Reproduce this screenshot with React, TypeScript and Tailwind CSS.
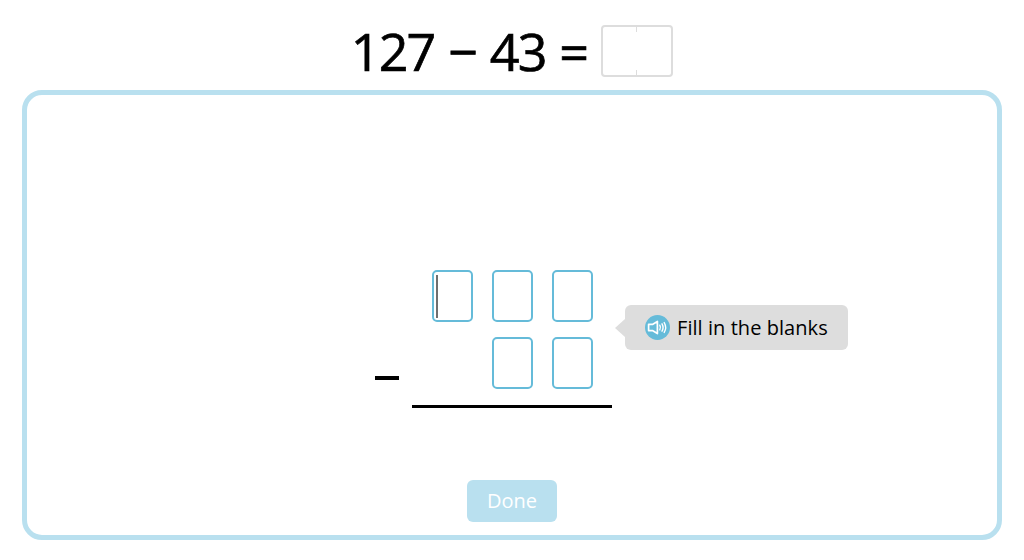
function Blank({ caret }: { caret?: boolean }) {
  return (
    <div className="w-[41px] h-[52px] border-2 border-[#65bbd9] rounded-[5px] bg-white pt-[3px] pl-[2px]">
      {caret && <div className="w-[2px] h-[43px] bg-[#6f6f6f]" />}
    </div>
  );
}

function SpeakerIcon() {
  return (
    <svg width="25" height="25" viewBox="0 0 25 25" className="shrink-0">
      <circle cx="12.5" cy="12.5" r="12.5" fill="#65bbd9" />
      <path d="M3.6 9.4h3.8l5-3v12.2l-5-3H3.6z" fill="none" stroke="#fff" strokeWidth="1.7" strokeLinejoin="round" />
      <path d="M14.8 10.2c.8 1.4.8 3.2 0 4.6M17 8.8c1.3 2.3 1.3 5.1 0 7.4M19.2 7.6c1.8 3 1.8 6.8 0 9.8" fill="none" stroke="#fff" strokeWidth="1.4" strokeLinecap="round" />
    </svg>
  );
}

export default function App() {
  return (
    <div className="w-[1024px] h-[560px] bg-white overflow-hidden flex flex-col items-center font-['Open_Sans',sans-serif] text-black">
      <div className="h-[90px] flex items-start pt-[25px] gap-[14px]">
        <div className="text-[52px] leading-[52px] [-webkit-text-stroke:0.7px_black] tracking-[-1.9px] [word-spacing:2.2px] whitespace-nowrap">127 − 43 =</div>
        <div className="relative w-[72px] h-[52px] border-2 border-[#dddddd] rounded-[4px]">
          <div className="absolute left-[33px] top-0 w-[1px] h-[5px] bg-[#dddddd]" />
          <div className="absolute left-[33px] bottom-0 w-[1px] h-[5px] bg-[#dddddd]" />
        </div>
      </div>

      <div className="w-[980px] h-[450px] border-[5px] border-[#b9e0ef] rounded-[20px] flex flex-col items-center">
        <div className="relative mt-[175px] w-[200px]">
          <div className="flex justify-end gap-[19px] pr-[19px]">
            <Blank caret />
            <Blank />
            <Blank />
          </div>
          <div className="flex justify-end gap-[19px] pr-[19px] mt-[15px]">
            <Blank />
            <Blank />
          </div>
          <div className="mt-[16px] h-[3px] bg-black" />
          <div className="absolute left-[-37px] top-[106px] w-[24px] h-[4px] bg-black" />

          <div className="absolute left-[213px] top-[35px] w-[223px] h-[45px] rounded-[6px] bg-[#dddddd] flex items-center pl-[20px] pr-3 gap-[7px]">
            <div className="absolute left-[-10px] top-[14px] w-0 h-0 border-y-[9px] border-y-transparent border-r-[10px] border-r-[#dddddd]" />
            <SpeakerIcon />
            <span className="text-[20px] tracking-[0.06px] leading-[28px] whitespace-nowrap">Fill in the blanks</span>
          </div>
        </div>

        <div className="mt-[72px] w-[90px] h-[42px] rounded-[6px] bg-[#b9e0ef] text-white text-[20px] flex items-center justify-center">
          Done
        </div>
      </div>
    </div>
  );
}
